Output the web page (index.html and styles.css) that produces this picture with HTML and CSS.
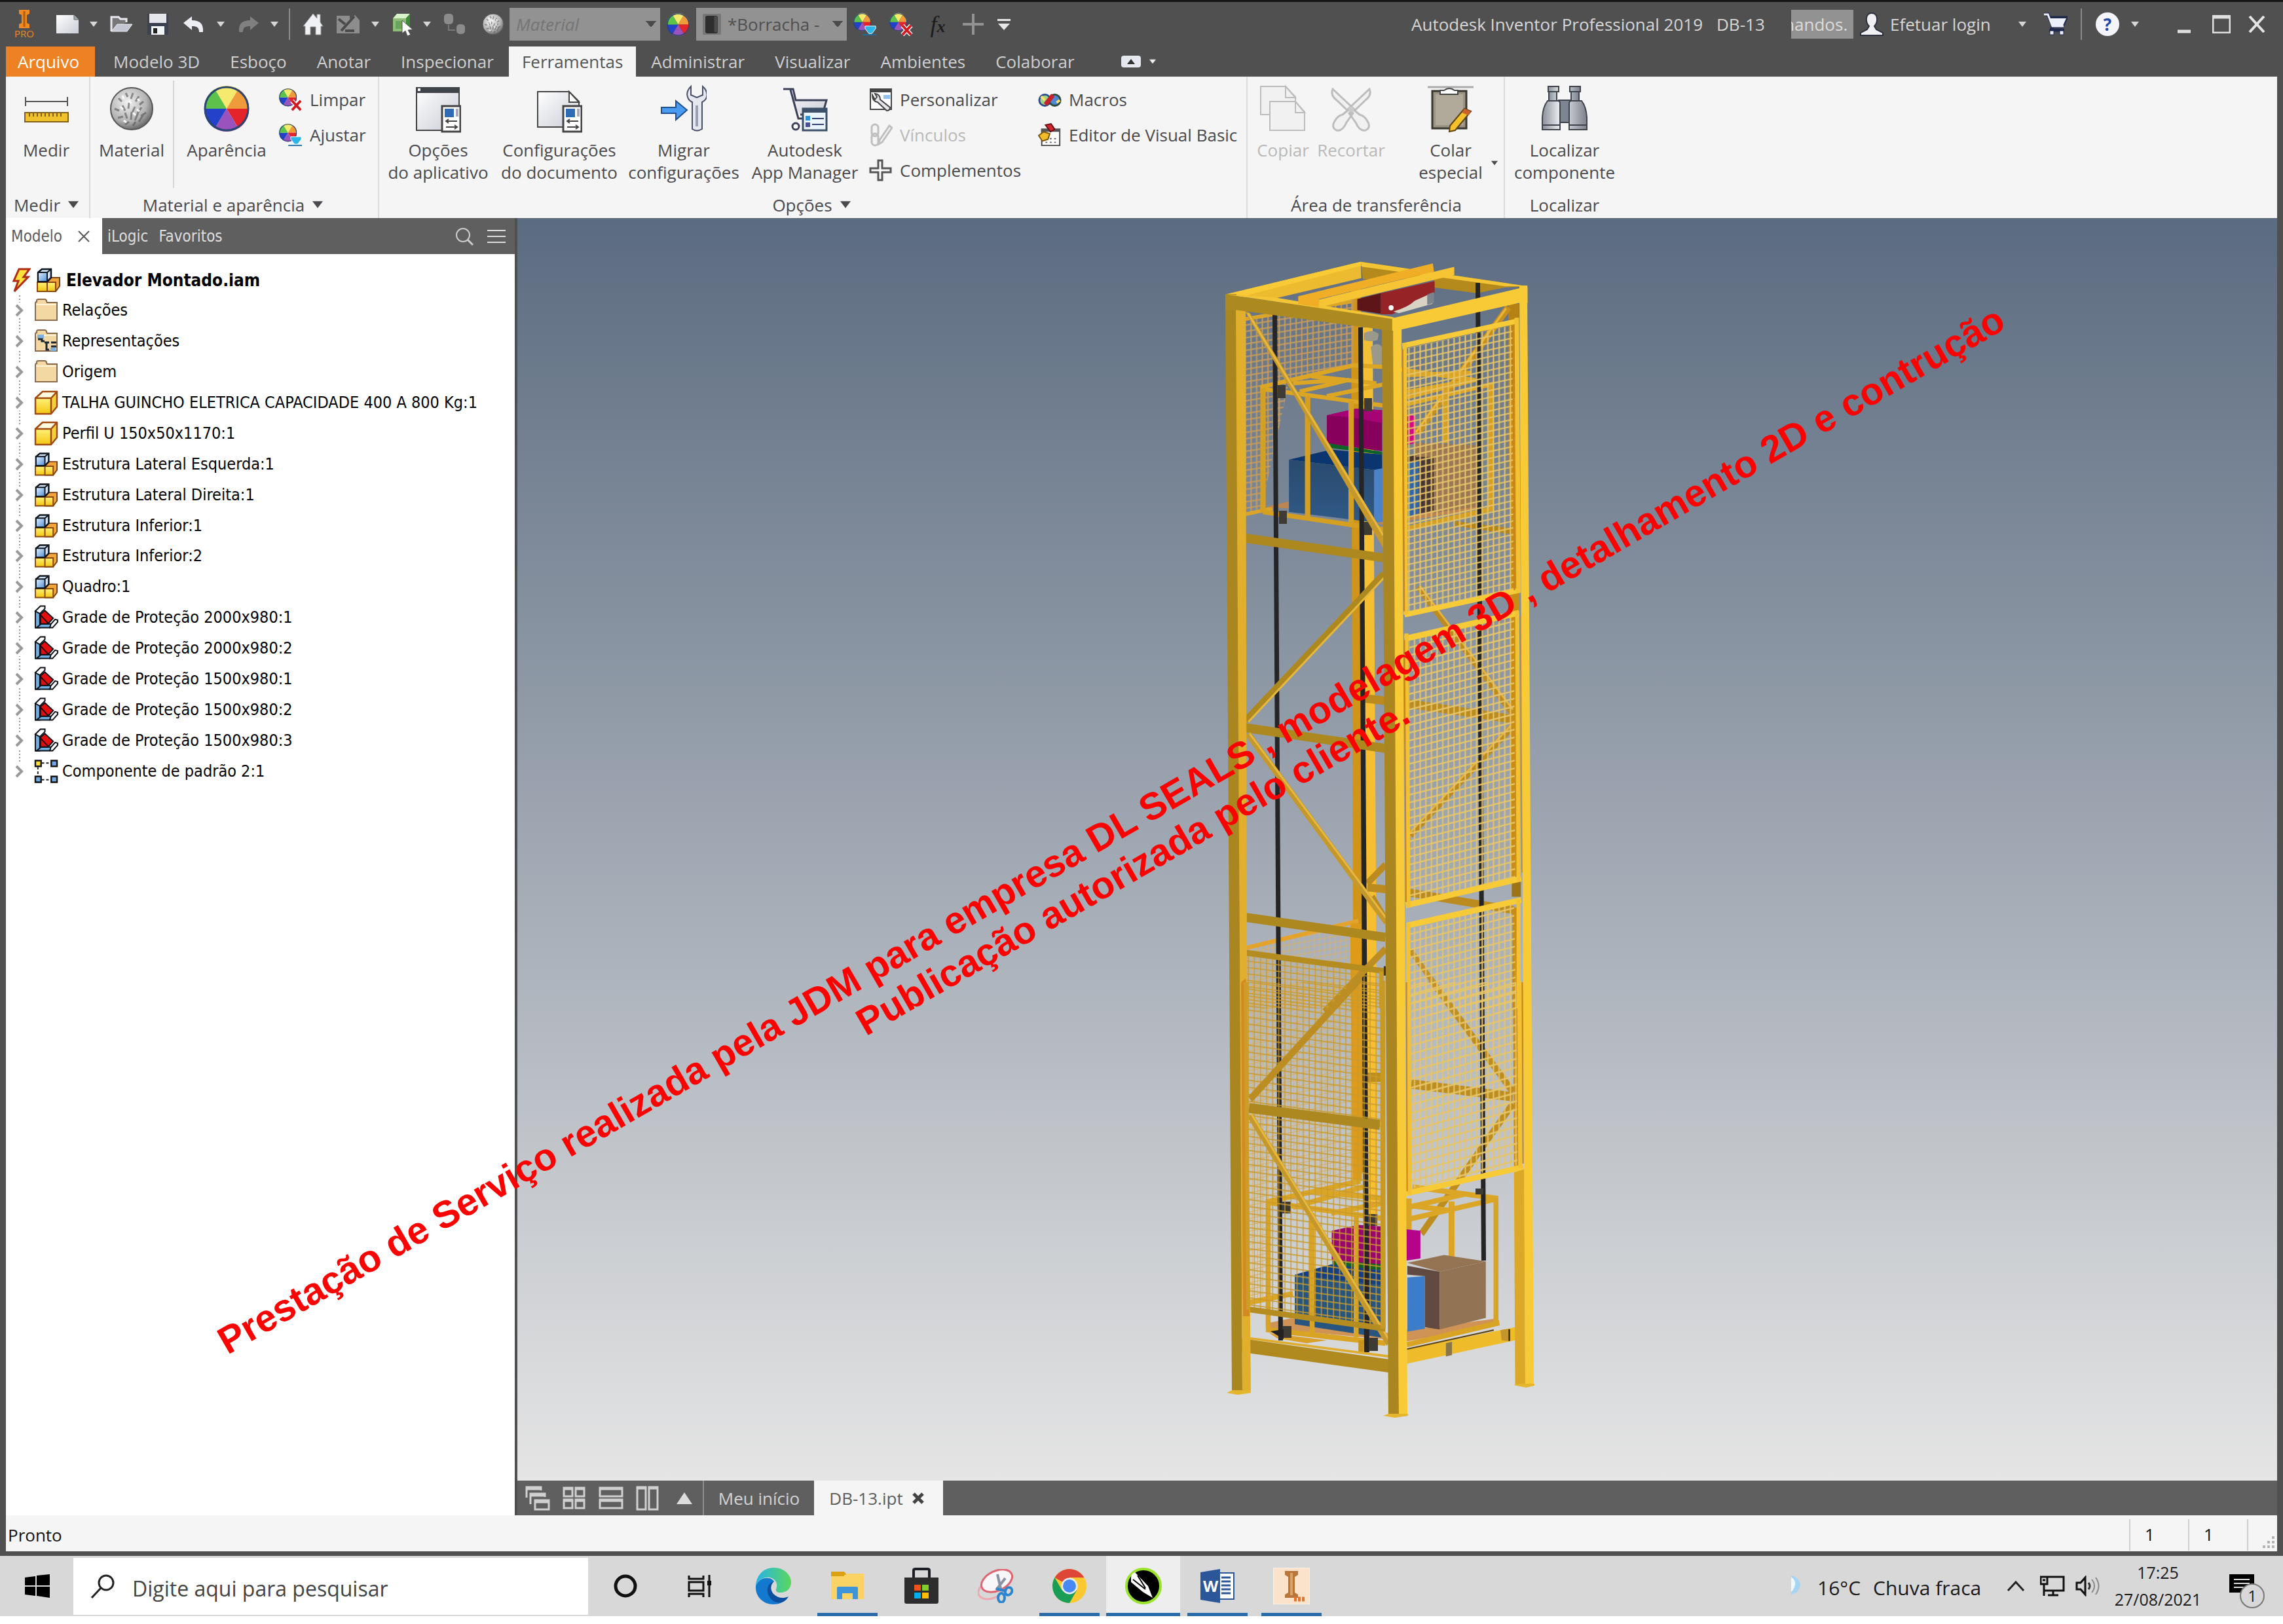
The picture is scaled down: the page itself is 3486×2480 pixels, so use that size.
FILE: index.html
```html
<!DOCTYPE html>
<html lang="pt-BR">
<head>
<meta charset="utf-8">
<title>Autodesk Inventor Professional 2019 - DB-13</title>
<link rel="stylesheet" href="styles.css">
</head>
<body>
<svg class="defs" aria-hidden="true">
  <defs>
    <linearGradient id="paper" x1="0" y1="0" x2="1" y2="1"><stop offset="0" stop-color="#fff"/><stop offset="1" stop-color="#c9cdd6"/></linearGradient>
    <linearGradient id="steel" x1="0" x2="1" y1="0" y2="0"><stop offset="0" stop-color="#8a8f99"/><stop offset=".4" stop-color="#eef0f4"/><stop offset="1" stop-color="#7b808b"/></linearGradient>
    <linearGradient id="gold" x1="0" y1="0" x2="0" y2="1"><stop offset="0" stop-color="#fff27a"/><stop offset="1" stop-color="#f3c510"/></linearGradient>
    <linearGradient id="bluebox" x1="0" y1="0" x2="1" y2="1"><stop offset="0" stop-color="#e4f1ff"/><stop offset="1" stop-color="#4f8fd8"/></linearGradient>
    <radialGradient id="ball" cx=".4" cy=".35" r=".65"><stop offset="0" stop-color="#f2f2f2"/><stop offset=".7" stop-color="#b4b4b4"/><stop offset="1" stop-color="#6d6d6d"/></radialGradient>
    <symbol id="caret" viewBox="0 0 12 8"><path d="M0 0h12L6 8z" fill="currentColor"/></symbol>
    <symbol id="sphere" viewBox="0 0 68 68"><circle cx="34" cy="34" r="32" fill="url(#ball)" stroke="#555" stroke-width="2"/><g stroke="#555" stroke-width="3" fill="none" opacity=".6"><path d="M14 18l5 5m6-13l3 6m8-6l-3 9m12-4l-5 8m12 0l-6 5M8 34l7 3m5-8l4 8m6-12l-1 9m10-3l-4 9m14-8l-6 9m13-1l-8 5M13 48l8-2m3-6l3 9m7-10l-1 12m11-11l-5 12m13-9l-7 11M24 58l6-4m6 6l4-6"/></g><g stroke="#fff" stroke-width="3" opacity=".9"><path d="M20 14l2 5m8 2l3 5m-16 5l4 4m22-16l3 3m-10 18l4 4m-18 8l4 3m16-20l4 3"/></g></symbol>
    <symbol id="wheel" viewBox="0 0 70 70"><g><path d="M35 35L17 5A35 35 0 0 1 53 5z" fill="#f5ea6e"/><path d="M35 35L53 5A34 34 0 0 1 69 35z" fill="#ef9b3c"/><path d="M35 35H69A34 34 0 0 1 53 65z" fill="#e3242b"/><path d="M35 35L53 65A35 35 0 0 1 17 65z" fill="#9a52bd"/><path d="M35 35L17 65A34 34 0 0 1 1 35z" fill="#2341c9"/><path d="M35 35H1A34 34 0 0 1 17 5z" fill="#5cc24a"/></g><circle cx="35" cy="35" r="33" fill="none" stroke="#2c4470" stroke-width="3"/></symbol>
    <symbol id="wheel-clear" viewBox="0 0 38 38"><use href="#wheel" width="29" height="31"/><path d="M21 21l14 15M35 21L21 36" stroke="#fff" stroke-width="7"/><path d="M21 21l14 15M35 21L21 36" stroke="#d3191f" stroke-width="4"/></symbol>
    <symbol id="wheel-fit" viewBox="0 0 38 38"><use href="#wheel" width="29" height="31"/><path d="M19 22h17v4l-6 8h-5l-6-8z" fill="#2cb5e6" stroke="#fff" stroke-width="1"/><path d="M15 36h22" stroke="#1b6fa3" stroke-width="2"/></symbol>
    <symbol id="i-folder" viewBox="0 0 37 36"><path d="M2 33V7q0-2 2-2V3q0-2 3-2h9q3 0 3 3l1 2h15v27z" fill="#f3d8a4" stroke="#8a6a48" stroke-width="2"/><path d="M3 9h31" stroke="#fff3d8" stroke-width="2"/></symbol>
    <symbol id="i-reps" viewBox="0 0 37 36"><use href="#i-folder"/><path d="M5 8h10v6H5z" fill="#7eb2dc"/><path d="M6 15h6v3h4M16 20h7M19 20v11h4M26 20h8M26 26h8" fill="none" stroke="#1d2733" stroke-width="3"/><path d="M25 28h8v5h-8z" fill="#7eb2dc"/></symbol>
    <symbol id="i-part" viewBox="0 0 37 38"><path d="M2 12L13 2H35L26 12z" fill="#fffbe0"/><path d="M26 12L35 2V25L26 36z" fill="#f4cf3a"/><path d="M2 12H26V36H2z" fill="url(#gold)"/><path d="M2 12L13 2H35V25L26 36H2zH26L35 2M26 12V36" fill="none" stroke="#a04a10" stroke-width="2.5" stroke-linejoin="round"/></symbol>
    <symbol id="i-asm" viewBox="0 0 38 38"><path d="M17 22l6-7h13v13l-6 8H17z" fill="#f2a53a" stroke="#7d3f0c" stroke-width="2"/><path d="M2 22h15v14H2zM17 22h13v14H17z" fill="url(#gold)" stroke="#8a480e" stroke-width="2"/><path d="M3 7l6-5h14v13l-6 6H3z" fill="#cfe2f6" stroke="#10151c" stroke-width="2.5"/><path d="M3 7h14v14H3z" fill="url(#bluebox)" stroke="#10151c" stroke-width="2"/><path d="M17 7l6-5" stroke="#10151c" stroke-width="2"/></symbol>
    <symbol id="i-frame" viewBox="0 0 38 38"><path d="M2 9h7v26H2z" fill="#6fb0e4" stroke="#0c1118" stroke-width="2"/><path d="M4 35l7-6h17l-4 6z" fill="#6fb0e4" stroke="#0c1118" stroke-width="2"/><path d="M2 9l8-8h7v4l-8 8z" fill="#fff" stroke="#0c1118" stroke-width="2"/><path d="M10 14l7-6 13 12-8 9H10z" fill="#e40d10" stroke="#0c1118" stroke-width="2"/><path d="M10 15l12 13" stroke="#200" stroke-width="2"/><path d="M26 30l7-8 4 1v3l-8 9h-4z" fill="#fff" stroke="#0c1118" stroke-width="2"/></symbol>
    <symbol id="i-pattern" viewBox="0 0 38 38"><path d="M12 6h15M6 12v15M12 32h15" stroke="#222" stroke-width="2" stroke-dasharray="4 3"/><g stroke="#151515" stroke-width="2.5"><path d="M2 2h9v9H2z" fill="#ffe03a"/><path d="M27 2h9v9h-9zM2 27h9v9H2zM27 27h9v9h-9z" fill="#6fa8e2"/></g></symbol>
    <symbol id="i-chev" viewBox="0 0 12 20"><path d="M2 2l8 8-8 8" fill="none" stroke="#9a9a9a" stroke-width="4"/></symbol>
    <symbol id="cart" viewBox="0 0 38 36"><path d="M2 3h6l8 18h16M10 8h26l-5 11H15zM15 22l-2 5h20" fill="none" stroke="#1f2a4d" stroke-width="5"/><path d="M2 3h6l7 18h17" fill="none" stroke="#eef" stroke-width="3"/><path d="M10 9h26l-5 11H15z" fill="#eef0fa"/><path d="M11 28h6v6h-6zM26 28h6v6h-6z" fill="#eef" stroke="#1f2a4d"/></symbol>
  </defs>
</svg>

<div class="app">
  <header class="titlebar">
    <nav class="quick" aria-label="Acesso rápido">
      <span class="logo"><svg width="18" height="28" viewBox="0 0 18 28"><path d="M1 0h16v6l-4 2v12l4 2v6H1v-6l4-2V8L1 6z" fill="#ef8a22"/><path d="M9 2v24" stroke="#b65c0b" stroke-width="3"/></svg><span>PRO</span></span>
      <button aria-label="Novo"><svg width="36" height="30" viewBox="0 0 36 30"><path d="M1 1h27l7 7v21H1z" fill="url(#paper)"/><path d="M28 1v7h7" fill="#9aa" stroke="#666"/></svg></button>
      <button aria-label="Mais"><svg width="12" height="8"><use href="#caret"/></svg></button>
      <button aria-label="Abrir"><svg width="36" height="26" viewBox="0 0 36 26"><path d="M2 24V2h11l3 3h9v5" fill="#777" stroke="#e8eaf0" stroke-width="3"/><path d="M2 24l9-11h23l-8 11z" fill="#c3c8d3" stroke="#eee"/></svg></button>
      <button aria-label="Salvar"><svg width="34" height="34" viewBox="0 0 34 34"><path d="M1 1h32v32H1z" fill="#3d4250"/><path d="M4 1h26v14H4z" fill="#e4e6ec"/><path d="M7 20h20v13H7z" fill="#f3f4f7"/><path d="M10 23h6v8h-6z" fill="#222"/></svg></button>
      <button aria-label="Desfazer"><svg width="34" height="26" viewBox="0 0 34 26"><path d="M14 1v6c13 0 18 6 17 18h-6c0-7-3-9-11-9v6L1 11z" fill="#eceef3"/></svg></button>
      <button aria-label="Mais"><svg width="12" height="8"><use href="#caret"/></svg></button>
      <button aria-label="Refazer"><svg width="34" height="26" viewBox="0 0 34 26"><path d="M20 1v6C7 7 2 13 3 25h6c0-7 3-9 11-9v6l13-11z" fill="#808080"/></svg></button>
      <button aria-label="Mais"><svg width="12" height="8"><use href="#caret"/></svg></button>
      <i class="vsep"></i>
      <button aria-label="Início"><svg width="32" height="34" viewBox="0 0 32 34"><path d="M16 1l6 7V2h5v12l4 6h-3v13h-8V21h-8v12H4V20H1z" fill="#f0f1f5" stroke="#999"/></svg></button>
      <button aria-label="Esboço"><svg width="38" height="32" viewBox="0 0 38 32"><path d="M1 3h20v5l8-6 7 8v20H1z" fill="#8d8d8d"/><path d="M8 26L28 4M4 8l10 8M14 26h14" stroke="#4a4a4a" stroke-width="4"/></svg></button>
      <button aria-label="Mais"><svg width="12" height="8"><use href="#caret"/></svg></button>
      <button aria-label="Selecionar"><svg width="34" height="36" viewBox="0 0 34 36"><path d="M2 9h20v20H2z" fill="#8dbd78"/><path d="M2 9l6-7h20l-6 7z" fill="#d7f2c9"/><path d="M22 9l6-7v18l-6 9z" fill="#3f8a35"/><path d="M6 13h12v12H6z" fill="#6aa35a"/><path d="M16 12l16 14-7 1 4 7-5 2-3-8-5 4z" fill="#fff" stroke="#555"/></svg></button>
      <button aria-label="Mais"><svg width="12" height="8"><use href="#caret"/></svg></button>
      <button aria-label="Vincular"><svg width="34" height="34" viewBox="0 0 34 34"><g fill="#8b8b8b"><rect x="1" y="1" width="14" height="16" rx="5"/><rect x="20" y="17" width="13" height="15" rx="5"/></g><path d="M8 18v8h10" stroke="#777" stroke-width="2" fill="none"/></svg></button>
      <button aria-label="Material"><svg width="34" height="34"><use href="#sphere"/></svg></button>
      <select class="combo combo-material" aria-label="Material"><option>Material</option></select>
      <button aria-label="Aparência"><svg width="35" height="35"><use href="#wheel"/></svg></button>
      <div class="combo combo-look"><svg width="28" height="32" viewBox="0 0 28 32"><rect width="28" height="32" rx="2" fill="#777"/><rect x="4" y="3" width="19" height="27" rx="3" fill="#2e2e2e"/><path d="M20 4v24" stroke="#4b4b4b" stroke-width="5"/></svg><select aria-label="Aparência"><option>*Borracha -</option></select></div>
      <button aria-label="Ajustar"><svg width="36" height="36"><use href="#wheel-fit"/></svg></button>
      <button aria-label="Limpar"><svg width="38" height="36"><use href="#wheel-clear"/></svg></button>
      <button class="fx" aria-label="Parâmetros"><em>f</em><sub>x</sub></button>
      <button aria-label="Adicionar"><svg width="32" height="32" viewBox="0 0 32 32"><path d="M16 0v32M0 16h32" stroke="#929292" stroke-width="4"/></svg></button>
      <button aria-label="Personalizar"><svg width="20" height="17" viewBox="0 0 20 17"><path d="M0 0h20v3H0zM1 7h18l-9 10z" fill="#e6e6e6"/></svg></button>
    </nav>
    <div class="title-right">
      <span class="product">Autodesk Inventor Professional 2019</span>
      <span>DB-13</span>
      <div class="help-search"><input aria-label="Pesquisar comandos" value="mandos."></div>
      <svg class="mid" width="36" height="36" viewBox="0 0 36 36"><path d="M1 35v-4l10-5 3-5c-6-6-6-20 4-20s10 14 4 20l3 5 10 5v4z" fill="#f0f0f4" stroke="#2d3240" stroke-width="2"/></svg>
      <a class="login" href="#">Efetuar login</a>
      <button aria-label="Mais"><svg width="12" height="8"><use href="#caret"/></svg></button>
      <button aria-label="Loja"><svg width="38" height="36"><use href="#cart"/></svg></button>
      <i class="vsep"></i>
      <button class="help" aria-label="Ajuda"><span>?</span></button>
      <button aria-label="Mais"><svg width="12" height="8"><use href="#caret"/></svg></button>
      <button class="min" aria-label="Minimizar"><svg width="20" height="30" viewBox="0 0 20 30"><path d="M0 26h20" stroke="#e0e0e0" stroke-width="5"/></svg></button>
      <button aria-label="Maximizar"><svg width="28" height="28" viewBox="0 0 28 28"><path d="M1 1h26v26H1zM1 4h26" fill="none" stroke="#e0e0e0" stroke-width="3"/></svg></button>
      <button aria-label="Fechar"><svg width="26" height="26" viewBox="0 0 26 26"><path d="M2 1l22 24M24 1L2 25" stroke="#e4e4e4" stroke-width="4"/></svg></button>
    </div>
  </header>

  <nav class="tabs" aria-label="Faixa de opções">
    <button class="file">Arquivo</button>
    <button>Modelo 3D</button><button>Esboço</button><button>Anotar</button><button>Inspecionar</button>
    <button class="active">Ferramentas</button>
    <button>Administrar</button><button>Visualizar</button><button>Ambientes</button><button>Colaborar</button>
    <button class="toggle" aria-label="Minimizar faixa"><svg width="30" height="18" viewBox="0 0 30 18"><rect width="30" height="18" rx="4" fill="#e6e8f0"/><path d="M15 5l6 8H9z" fill="#333"/></svg><svg width="10" height="8"><use href="#caret"/></svg></button>
  </nav>

  <section class="ribbon">
    <div class="group g-measure">
      <div class="tools">
        <button class="big"><svg width="68" height="74" viewBox="0 0 68 74"><path d="M2 19v14M66 19v14M2 26h64" stroke="#555" stroke-width="2"/><rect x="1" y="43" width="66" height="14" fill="#f0c22c" stroke="#80601a" stroke-width="2"/><path d="M8 44v5m6-5v5m6-5v5m6-5v5m6-5v5m6-5v5m6-5v5m6-5v5m6-5v5" stroke="#80601a" stroke-width="2"/></svg>Medir</button>
      </div>
      <div class="caption">Medir <svg width="16" height="11"><use href="#caret"/></svg></div>
    </div>
    <div class="group g-material">
      <div class="tools">
        <button class="big"><svg width="68" height="74"><use href="#sphere"/></svg>Material</button>
        <i class="rule"></i>
        <button class="big"><svg width="70" height="74"><use href="#wheel"/></svg>Aparência</button>
        <div class="small-col">
          <button><svg width="38" height="38"><use href="#wheel-clear"/></svg>Limpar</button>
          <button><svg width="38" height="38"><use href="#wheel-fit"/></svg>Ajustar</button>
        </div>
      </div>
      <div class="caption">Material e aparência <svg width="16" height="11"><use href="#caret"/></svg></div>
    </div>
    <div class="group g-options">
      <div class="tools">
        <button class="big"><svg width="70" height="74" viewBox="0 0 70 74"><path d="M2 5h65v65H2z" fill="url(#paper)" stroke="#444" stroke-width="2"/><path d="M1 4h67v9H1z" fill="#3f434a"/><path d="M4 6h4v4H4z" fill="#fff"/><path d="M41 33h28v39H41z" fill="#fff" stroke="#444" stroke-width="3"/><path d="M45 37h14v13H45z" fill="#2f6cb5"/><path d="M62 37h4v12h-4z" fill="#aab"/><path d="M47 56h17M47 65h17M51 53l-4 3 4 3M60 62l4 3-4 3" fill="none" stroke="#444" stroke-width="2"/></svg>Opções<br>do aplicativo</button>
        <button class="big"><svg width="70" height="74" viewBox="0 0 70 74"><path d="M2 11h48l15 15v39H2z" fill="url(#paper)" stroke="#444" stroke-width="2"/><path d="M50 11v16h15z" fill="#fff" stroke="#444" stroke-width="2"/><path d="M41 33h28v39H41z" fill="#fff" stroke="#444" stroke-width="3"/><path d="M45 37h14v13H45z" fill="#2f6cb5"/><path d="M62 37h4v12h-4z" fill="#aab"/><path d="M47 56h17M47 65h17M51 53l-4 3 4 3M60 62l4 3-4 3" fill="none" stroke="#444" stroke-width="2"/></svg>Configurações<br>do documento</button>
        <button class="big"><svg width="70" height="74" viewBox="0 0 70 74"><path d="M1 35h22V25l17 14-17 15V44H1z" fill="#4b9cf0" stroke="#1e4f8f" stroke-width="2"/><path d="M46 3q-8 8-5 16 1 5 7 8v41q7 5 15 0V27q6-3 7-8 2-9-6-16v13l-9 4-9-4z" fill="#e6e8f0" stroke="#4a4f68" stroke-width="2"/><path d="M55 32v32" stroke="#9aa0b4" stroke-width="4"/></svg>Migrar<br>configurações</button>
        <button class="big"><svg width="70" height="74" viewBox="0 0 70 74"><path d="M2 7h15l4 17h47l-6 22H28" fill="url(#paper)" stroke="#3c4058" stroke-width="3"/><path d="M13 8l12 44h10" fill="none" stroke="#3c4058" stroke-width="3"/><circle cx="21" cy="64" r="5" fill="#fff" stroke="#3c4058" stroke-width="3"/><path d="M32 37h36v33H32z" fill="#e9f4fc" stroke="#3c5068" stroke-width="3"/><path d="M31 36h38v7H31z" fill="#3c5068"/><path d="M36 48h7v7h-7z" fill="#2d93d8"/><path d="M36 58h7v7h-7z" fill="#4b4f9c"/><path d="M46 52h18M46 61h18" stroke="#347" stroke-width="2"/></svg>Autodesk<br>App Manager</button>
        <div class="small-col mid-col">
          <button><svg width="36" height="38" viewBox="0 0 36 38"><path d="M2 3h32v31H2z" fill="#fff" stroke="#444" stroke-width="2"/><path d="M1 2h34v6H1z" fill="#444"/><path d="M22 12h10v6H22z" fill="#8fc2ee"/><path d="M5 12q0 10 8 11l14 13q5 0 5-5L17 19q0-8-8-9l3 5-3 4z" fill="#e3e5ea" stroke="#444" stroke-width="2"/></svg>Personalizar</button>
          <button disabled><svg width="36" height="36" viewBox="0 0 36 36"><g fill="none" stroke="#bfbfbf" stroke-width="3"><rect x="4" y="2" width="10" height="18" rx="5"/><rect x="4" y="16" width="10" height="18" rx="5"/><path d="M16 26l15-22 4 3-15 22-5 3z"/></g></svg>Vínculos</button>
          <button><svg width="36" height="36" viewBox="0 0 36 36"><path d="M14 3h6v12h13v6H20v12h-6V21H2v-6h12z" fill="#fff" stroke="#555" stroke-width="3"/></svg>Complementos</button>
        </div>
        <div class="small-col">
          <button><svg width="38" height="30" viewBox="0 0 38 30"><circle cx="11" cy="16" r="9" fill="#9fd08a" stroke="#2c4c8c" stroke-width="3"/><circle cx="27" cy="16" r="9" fill="#4d86d2" stroke="#2a4a3a" stroke-width="3"/><path d="M5 10l6 6M30 20l5-4" stroke="#ffe060" stroke-width="4"/><path d="M12 23L24 8" stroke="#c8202a" stroke-width="7"/></svg>Macros</button>
          <button><svg width="38" height="38" viewBox="0 0 38 38"><path d="M6 10h29v26H6z" fill="#fff" stroke="#444" stroke-width="2"/><path d="M5 9h31v5H5z" fill="#555"/><path d="M12 3l9-2 6 9-7 4z" fill="#d02430" stroke="#611" stroke-width="2"/><path d="M1 20l8-6 10 3-3 9-9 3z" fill="#f1bb2a" stroke="#7a560d" stroke-width="2"/><path d="M12 31h3m4 0h3m4 0h3m-3-6h3m-10 0h3" stroke="#667" stroke-width="2"/></svg>Editor de Visual Basic</button>
        </div>
      </div>
      <div class="caption">Opções <svg width="16" height="11"><use href="#caret"/></svg></div>
    </div>
    <div class="group g-clipboard">
      <div class="tools">
        <button class="big" disabled><svg width="70" height="74" viewBox="0 0 70 74"><g fill="#f1f1f1" stroke="#bdbdbd" stroke-width="2"><path d="M1 3h38l15 16v27H1z"/><path d="M39 3v17h15z"/><path d="M15 26h39l14 16v28H15z"/><path d="M54 26v17h14z"/></g></svg>Copiar</button>
        <button class="big" disabled><svg width="62" height="74" viewBox="0 0 62 74"><g fill="#f1f1f1" stroke="#bdbdbd" stroke-width="3"><path d="M3 7q-4 9 6 17l21 20 6-6zM59 7q4 9-6 17L32 44l-6-6z"/><path d="M28 38l6 6-10 14q-6 14-15 12-9-4-3-14 4-8 12-10zM34 38l-6 6 10 14q6 14 15 12 9-4 3-14-4-8-12-10z"/></g><circle cx="31" cy="38" r="4" fill="#ccc"/></svg>Recortar</button>
        <i class="rule"></i>
        <button class="big paste"><svg width="72" height="74" viewBox="0 0 72 74"><path d="M1 4h70" stroke="#aaa" stroke-width="3"/><path d="M8 10h52v57H8z" fill="#9b9384" stroke="#3a372f" stroke-width="3"/><path d="M13 15h42v47H13z" fill="#b1a999"/><path d="M20 15V9h6q8-6 16 0h5v6z" fill="#fff" stroke="#444" stroke-width="2"/><path d="M57 37l10 4-24 29-9 2 1-9z" fill="#f5c12b" stroke="#5d4312" stroke-width="2"/><path d="M57 37l10 4-4 6-10-4z" fill="#c9622b"/></svg>Colar<br>especial<svg class="drop" width="10" height="8"><use href="#caret"/></svg></button>
      </div>
      <div class="caption">Área de transferência</div>
    </div>
    <div class="group g-find">
      <div class="tools">
        <button class="big"><svg width="70" height="74" viewBox="0 0 70 74"><g stroke="#3e434c" stroke-width="2"><path d="M26 24h18v34H26z" fill="#7d8492"/><path d="M11 10h12v16H11zM45 10h12v16H45z" fill="url(#steel)"/><path d="M10 3h16v8H10zM43 3h16v8H43z" fill="url(#steel)"/><path d="M9 25h16q3 0 3 4v40H1V50Q2 34 9 25zM61 25H45q-3 0-3 4v40h27V50Q68 34 61 25z" fill="url(#steel)"/><path d="M1 62h27M42 62h27"/></g></svg>Localizar<br>componente</button>
      </div>
      <div class="caption">Localizar</div>
    </div>
  </section>

  <main class="workspace">
    <aside class="browser">
      <div class="browser-tabs">
        <button class="active">Modelo <svg width="20" height="20" viewBox="0 0 20 20"><path d="M2 2l16 16M18 2L2 18" stroke="#555" stroke-width="2"/></svg></button>
        <button>iLogic</button><button>Favoritos</button>
        <button class="find" aria-label="Pesquisar"><svg width="30" height="30" viewBox="0 0 30 30"><circle cx="13" cy="13" r="10" fill="none" stroke="#ccc" stroke-width="2"/><path d="M20 20l8 8" stroke="#ccc" stroke-width="3"/></svg></button>
        <button class="menu" aria-label="Menu"><svg width="28" height="24" viewBox="0 0 28 24"><path d="M0 3h28M0 12h28M0 21h28" stroke="#ddd" stroke-width="2"/></svg></button>
      </div>
      <div class="root"><svg width="28" height="38" viewBox="0 0 28 38"><path d="M10 2h16l-9 12h7L3 36l6-16H2z" fill="#ffe23a" stroke="#b02c14" stroke-width="3"/></svg><svg width="38" height="38"><use href="#i-asm"/></svg>Elevador Montado.iam</div>
      <ul class="tree">
        <li><svg class="chev"><use href="#i-chev"/></svg><svg class="ico"><use href="#i-folder"/></svg>Relações</li>
        <li><svg class="chev"><use href="#i-chev"/></svg><svg class="ico"><use href="#i-reps"/></svg>Representações</li>
        <li><svg class="chev"><use href="#i-chev"/></svg><svg class="ico"><use href="#i-folder"/></svg>Origem</li>
        <li><svg class="chev"><use href="#i-chev"/></svg><svg class="ico"><use href="#i-part"/></svg>TALHA GUINCHO ELETRICA CAPACIDADE 400 A 800 Kg:1</li>
        <li><svg class="chev"><use href="#i-chev"/></svg><svg class="ico"><use href="#i-part"/></svg>Perfil U 150x50x1170:1</li>
        <li><svg class="chev"><use href="#i-chev"/></svg><svg class="ico"><use href="#i-asm"/></svg>Estrutura Lateral Esquerda:1</li>
        <li><svg class="chev"><use href="#i-chev"/></svg><svg class="ico"><use href="#i-asm"/></svg>Estrutura Lateral Direita:1</li>
        <li><svg class="chev"><use href="#i-chev"/></svg><svg class="ico"><use href="#i-asm"/></svg>Estrutura Inferior:1</li>
        <li><svg class="chev"><use href="#i-chev"/></svg><svg class="ico"><use href="#i-asm"/></svg>Estrutura Inferior:2</li>
        <li><svg class="chev"><use href="#i-chev"/></svg><svg class="ico"><use href="#i-asm"/></svg>Quadro:1</li>
        <li><svg class="chev"><use href="#i-chev"/></svg><svg class="ico"><use href="#i-frame"/></svg>Grade de Proteção 2000x980:1</li>
        <li><svg class="chev"><use href="#i-chev"/></svg><svg class="ico"><use href="#i-frame"/></svg>Grade de Proteção 2000x980:2</li>
        <li><svg class="chev"><use href="#i-chev"/></svg><svg class="ico"><use href="#i-frame"/></svg>Grade de Proteção 1500x980:1</li>
        <li><svg class="chev"><use href="#i-chev"/></svg><svg class="ico"><use href="#i-frame"/></svg>Grade de Proteção 1500x980:2</li>
        <li><svg class="chev"><use href="#i-chev"/></svg><svg class="ico"><use href="#i-frame"/></svg>Grade de Proteção 1500x980:3</li>
        <li><svg class="chev"><use href="#i-chev"/></svg><svg class="ico"><use href="#i-pattern"/></svg>Componente de padrão 2:1</li>
      </ul>
    </aside>

    <section class="stage">
      <svg class="model" viewBox="790 333 2687 1928" role="img" aria-label="Elevador">
        <defs>
          <pattern id="meshR" width="25" height="29" patternUnits="userSpaceOnUse" patternTransform="skewY(-12)"><path d="M0 4h25M4 0v29" stroke="#e6c468" stroke-width="6" fill="none"/></pattern>
          <pattern id="meshL" width="25" height="27" patternUnits="userSpaceOnUse" patternTransform="skewY(-9)"><path d="M0 4h25M4 0v27" stroke="#c79a5a" stroke-width="6" fill="none"/></pattern>
          <pattern id="meshF" width="27" height="24" patternUnits="userSpaceOnUse" patternTransform="skewY(6)"><path d="M0 3h27M3 0v24" stroke="#c99a2c" stroke-width="4" fill="none"/></pattern>
          <pattern id="meshB" width="23" height="22" patternUnits="userSpaceOnUse" patternTransform="skewY(-9)"><path d="M0 3h23M3 0v22" stroke="#d8b068" stroke-width="3" fill="none"/></pattern>
          <linearGradient id="crate" x1="0" x2="0" y1="0" y2="1"><stop offset="0" stop-color="#2a4a6e"/><stop offset="1" stop-color="#305a86"/></linearGradient>
        </defs>

        <!-- rear column and rear bracing -->
        <path d="M2063 440L2078 440 2083 1790 2067 1790z" fill="#cf9418"/>
        <path d="M2080 500H2096L2104 1860H2086z" fill="#f6be31"/>
        <g transform="translate(1840 380) scale(.3444 .3571)">
          <path d="M178 295L660 215V500L370 580 250 1110 180 1130z" fill="url(#meshL)"/>
          <path d="M178 300L650 225M180 1135L300 1110" stroke="#dba52a" stroke-width="16"/>
          <path d="M690 55L1430 160 1330 165 1205 190 1015 165V125L700 130z" fill="#b58a1d"/>
          <path d="M690 55L1430 160H1330L695 76z" fill="#f3c535"/>
          <path d="M90 195L690 55 693 125 310 212 180 207z" fill="#edbb2f"/>
          <path d="M90 195L690 55 693 72 180 200z" fill="#f8cb36"/>
          <path d="M675 215L780 190V278L675 262z" fill="#5e1518"/>
          <path d="M780 190L1018 138V188L830 280H780z" fill="#962427"/>
          <path d="M835 268Q900 250 930 222L985 198 1008 195V235L860 275z" fill="#d8d3c4"/>
          <path d="M985 195L1015 185V230L985 240z" fill="#7d858c"/><circle cx="825" cy="252" r="11" fill="#fff"/>
          <path d="M1345 235H1392V640H1345z" fill="#b58112"/>
          <path d="M1345 250L940 790" stroke="#c88f1c" stroke-width="30"/>
          <path d="M1335 255L935 785" stroke="#e8b638" stroke-width="9"/>
          <path d="M1345 640H1392V1560H1355z" fill="#c98c15"/>
          <path d="M1110 1165L1360 1195V1220L1110 1185z" fill="#b98416"/>
        </g>

        <!-- upper cabin -->
        <g transform="translate(1840 380) scale(.3444 .3571)">
          <path d="M705 380H738V620H705z" fill="#f1c036"/><path d="M705 360q40-20 65 5l-5 25q-30 10-60 0zM735 420q30-25 50 0v80h-40z" fill="#9b9a8a"/>
          <g fill="none" stroke="#dca624" stroke-width="18">
            <path d="M245 592L660 498 790 505M390 575L620 560M470 545L760 575M420 610L640 560M540 630L790 580M790 505L1190 560 895 612M895 540L1180 530"/>
            <path d="M245 598L790 670M895 665L1275 578M895 635L1200 560"/>
          </g>
          <path d="M265 1105L372 1080 790 1180 1225 1110 1225 1090 790 1130z" fill="#bd8650"/>
          <path d="M540 712L670 683 785 690V865L540 832z" fill="#86005c"/>
          <path d="M540 712L670 683 785 690V745L640 720z" fill="#a60474"/>
          <path d="M895 708L932 716V832L895 838z" fill="#d8048c"/>
          <path d="M550 832L785 868V880L560 852z" fill="#0d6326"/>
          <path d="M372 902L560 858 785 880V950z" fill="#0b356e"/>
          <path d="M372 902L750 945V1170L372 1125z" fill="url(#crate)"/>
          <path d="M750 945L788 938V1168L750 1172z" fill="#4b83c6"/>
          <path d="M900 905L948 910V1132L900 1145z" fill="#2a67b2"/>
          <path d="M900 885L1015 880V1120L948 1135V910H900z" fill="#453535"/>
          <path d="M935 830L1222 840V1100L1015 1130V890H935z" fill="#9b7854"/>
          <g fill="none" stroke="#d5a022" stroke-width="24">
            <path d="M257 595V1125M455 630V1150M648 650V1180M1268 575V1120M1068 590V830"/>
            <path d="M257 1125L790 1200M900 1195L1280 1110" stroke-width="20"/>
          </g>
        </g>

        <!-- middle rear bracing -->
        <g transform="translate(1840 900) scale(.3444 .4082)">
          <path d="M1350 100H1392V1080L1360 1085z" fill="#c98c15"/>
          <g fill="none" stroke="#bb8b20" stroke-width="26">
            <path d="M710 408L800 417M905 428L1360 485" stroke-width="32"/>
            <path d="M945 -10L1360 460M1360 515L910 920"/>
            <path d="M720 1115L800 1122M910 1135L1370 1200" stroke-width="30"/>
            <path d="M800 1030L720 1100M740 1150L800 1235"/>
          </g>
          <path d="M955 -10L1365 450M1355 510L908 910" stroke="#e3b444" stroke-width="8"/>
          <path d="M1360 1090H1400V1150H1360z" fill="#9b7416"/>
          <path d="M165 1340L670 1240V1568H190z" fill="url(#meshB)"/>
          <path d="M165 1345L680 1240" stroke="#e4a42c" stroke-width="16"/>
          <path d="M645 1250H695V1568H645z" fill="#de9a19"/>
          <path d="M1362 1190H1385V1568H1362z" fill="#c98c15"/>
        </g>

        <!-- lower cabin -->
        <g transform="translate(1840 1500) scale(.3444 .4464)">
          <path d="M190 0H670V700L270 750V1090L200 1100z" fill="url(#meshB)"/>
          <path d="M647 0H695V680L655 690z" fill="#de9a19"/>
          <path d="M1365 0H1390V640H1370z" fill="#c98c15"/>
          <g fill="none" stroke="#be8d1f" stroke-width="26">
            <path d="M720 325H780M915 348L1365 392" stroke-width="32"/>
            <path d="M1000 -10L1365 375M1365 415L960 860"/>
          </g>
          <g fill="none" stroke="#dba626" stroke-width="18">
            <path d="M270 752L690 680M390 770L700 700M480 715L790 740M560 790L790 755M920 700L1300 740M900 770L1150 725M920 765L1080 780M895 812L1300 740"/>
            <path d="M270 752L790 808"/>
            <path d="M200 1095L390 1065"/>
            <path d="M1093 750V940M903 740V850" stroke-width="26"/>
          </g>
          <path d="M285 1165L380 1150 800 1200 1300 1150 1300 1170 897 1228 290 1185z" fill="#cf9455"/>
          <path d="M562 850L680 830 780 835V975L562 950z" fill="#9a0670"/>
          <path d="M893 845L955 850V945L893 952z" fill="#b5038a"/>
          <path d="M565 950L780 965V985L565 970z" fill="#0d6326"/>
          <path d="M398 1000L560 965 780 985V1040z" fill="#123f86"/>
          <path d="M398 1000L780 1035V1215L398 1170z" fill="#27557f"/>
          <path d="M897 1010L975 1005V1185L897 1195z" fill="#3b7dc8"/>
          <path d="M897 960L1060 933 1245 955 1040 990z" fill="#957453"/>
          <path d="M897 970L1040 990V1188L975 1180V1005L897 1000z" fill="#604a42"/>
          <path d="M1040 990L1245 955V1148L1040 1188z" fill="#927353"/>
          <g fill="none" stroke="#d9a424" stroke-width="22">
            <path d="M280 750V1185M475 790V1200M670 800V1215M1290 740V1170"/>
            <path d="M270 1188L800 1235M895 1240L1305 1165" stroke-width="18"/>
          </g>
          <path d="M285 1200L540 1225 450 1235 320 1218z" fill="#d9a02a"/>
          <path d="M680 1225H705V1265H680z" fill="#c8931f"/>
          <path d="M895 1255L1375 1180V1225L895 1305z" fill="#eebb2b"/>
          <path d="M895 1255L1280 1190" stroke="#5b4310" stroke-width="5"/>
          <path d="M1068 1235L1095 1230V1275L1068 1280z" fill="#8a7547"/>
          <path d="M1310 1190L1350 1185V1228L1315 1225z" fill="#c5952a"/><path d="M1345 1187h8v40h-8z" fill="#463c22"/>
        </g>

        <!-- guide rails -->
        <g fill="#252525">
          <path d="M1943 480H1950L1959 2047H1952z"/>
          <path d="M2074 500H2081L2091 2065H2083z"/>
          <path d="M2253 432H2260L2269 1925H2262z"/>
        </g>
        <g fill="#3e3b34">
          <path d="M1951 588h12v20h-12zM2083 608h12v20h-12zM1953 780h12v20h-12zM2083 797h12v20h-12zM1957 1835h14v18h-14zM2090 1854h13v18h-13zM1959 2025h13v18h-13zM2090 2043h14v20h-14zM2253 1815h12v9h-12z"/>
        </g>
        <path d="M1940 2033L1960 2030V2045z" fill="#222"/>

        <!-- right hand guard panels -->
        <g transform="translate(1840 380) scale(.3444 .3571)">
          <path d="M892 425L1370 325 1375 1460 895 1555z" fill="url(#meshR)"/>
          <path d="M875 415L1388 308M885 1565L1395 1460" stroke="#f7ca37" stroke-width="22"/>
          <path d="M885 405L890 1565M1382 295L1390 1470" stroke="#f3c233" stroke-width="20"/>
          <path d="M876 430L883 1550M1366 330L1372 1460" stroke="#ca8416" stroke-width="7"/>
        </g>
        <g transform="translate(1840 900) scale(.3444 .4082)">
          <path d="M905 190L1370 100 1375 1080 905 1170z" fill="url(#meshR)"/>
          <path d="M885 185L1392 88M890 1182L1402 1082M895 1258L1402 1162" stroke="#f7ca37" stroke-width="22"/>
          <path d="M893 165L902 1190M1384 80L1390 1090" stroke="#f3c233" stroke-width="18"/>
          <path d="M884 190L891 1170M1402 100L1406 1060" stroke="#ca8416" stroke-width="6"/>
          <path d="M910 1350L1100 1575" stroke="#c0902a" stroke-width="22"/>
          <path d="M910 1270L1370 1175 1380 1568H912z" fill="url(#meshR)"/>
          <path d="M902 1250V1568M1390 1160V1568" stroke="#f3c233" stroke-width="18"/>
        </g>
        <g transform="translate(1840 1500) scale(.3444 .4464)">
          <path d="M915 0H1380L1385 625 915 705z" fill="url(#meshR)"/>
          <path d="M893 722L1412 632" stroke="#f7ca37" stroke-width="20"/>
          <path d="M903 -5L907 725M1393 -5L1398 635" stroke="#f3c233" stroke-width="18"/>
          <path d="M893 0L896 715M1407 0L1410 620" stroke="#ca8416" stroke-width="6"/>
          <path d="M1370 650L1415 640 1420 1378H1375z" fill="#dca828"/>
        </g>

        <!-- left face bracing and its guard -->
        <g transform="translate(1840 380) scale(.3444 .3571)">
          <path d="M175 265L200 275 790 1215V1280z" fill="#c4982a"/>
          <path d="M190 275L790 1225" stroke="#e6b840" stroke-width="9"/>
          <path d="M165 1215L790 1302V1340L165 1255z" fill="#ad881f"/>
        </g>
        <g transform="translate(1840 900) scale(.3444 .4082)" fill="none">
          <path d="M792 -58L180 490" stroke="#ad881f" stroke-width="26"/>
          <path d="M792 -42L192 496" stroke="#e6b840" stroke-width="8"/>
          <path d="M180 518L800 595M165 1225L800 1302" stroke="#ad881f" stroke-width="34"/>
          <path d="M190 540L805 1245" stroke="#c4982a" stroke-width="26"/>
          <path d="M198 540L805 1232" stroke="#e6b840" stroke-width="8"/>
          <path d="M182 1370L775 1425V1568H182z" fill="url(#meshF)"/>
          <path d="M800 1345L530 1580" stroke="#bb8d22" stroke-width="26"/>
          <path d="M165 1358L795 1428" stroke="#b48c20" stroke-width="22"/>
          <path d="M175 1365V1568M782 1430V1568" stroke="#c79a25" stroke-width="20"/>
          <path d="M158 1330v35M797 1410v35" stroke="#443818" stroke-width="9"/>
        </g>
        <g transform="translate(1840 1500) scale(.3444 .4464)" fill="none">
          <path d="M190 0H780V1180L195 1115z" fill="url(#meshF)"/>
          <path d="M690 -15L200 400" stroke="#bb8d22" stroke-width="26"/>
          <path d="M195 430L775 488" stroke="#ad881f" stroke-width="34"/>
          <path d="M200 455L815 1235" stroke="#c4982a" stroke-width="26"/>
          <path d="M205 450L815 1222" stroke="#e6b840" stroke-width="8"/>
          <path d="M185 1118L800 1185" stroke="#b48c20" stroke-width="20"/>
          <path d="M787 -5L790 1185" stroke="#c79a25" stroke-width="22"/>
          <path d="M160 1218L815 1290V1335L160 1265z" fill="#b08a1f"/>
          <path d="M200 1218L815 1280" stroke="#e0ac2b" stroke-width="8"/>
        </g>

        <!-- main columns and top beams -->
        <path d="M1871 449H1888L1897 2126H1881z" fill="#a98620"/>
        <path d="M1887 460H1902L1904 1480 1910 2124 1897 2126z" fill="#e2af2d"/>
        <path d="M1902 1494L1903 1500 1908 2010H1898L1895 1500z" fill="#d28a22"/>
        <path d="M1899 1500H1905L1909 2000H1903z" fill="#cd9d27"/>
        <path d="M2110 490H2128L2136 2161H2120z" fill="#a98620"/>
        <path d="M2127 485H2140L2149 2159 2136 2161z" fill="#f8cb36"/>
        <path d="M2320 436H2332L2342 2114 2329 2117z" fill="#f8cb36"/>
        <path d="M1873 2127L1881 2123H1910V2127L1890 2130zM2112 2162L2120 2159H2150V2162L2130 2165zM2311 2115L2320 2113H2343V2116L2330 2119z" fill="#e5b52d"/>
        <g transform="translate(1840 380) scale(.3444 .3571)">
          <path d="M90 195L833 297V347L785 345 138 262H90z" fill="#ad8a20"/>
          <path d="M90 194L310 208 835 292V300z" fill="#f3c535"/>
          <path d="M830 297L1430 160V232L1390 232 870 345 830 350z" fill="#f8cb36"/>
          <path d="M413 203L1010 62 1015 97 505 215V250L413 236z" fill="#f0ae26"/>
          <path d="M505 217L1105 77V112L505 250z" fill="#f7c433"/>
        </g>
      </svg>
      <nav class="doc-tabs" aria-label="Documentos">
        <button aria-label="Cascata"><svg width="38" height="38" viewBox="0 0 38 38"><g fill="#5f5f5f" stroke="#d0d0d0" stroke-width="3"><path d="M2 18V2h22v5M2 5h22M8 28V12h22v5M8 15h22"/><path d="M15 22h21v14H15zM15 25h21"/></g></svg></button>
        <button aria-label="Organizar"><svg width="36" height="36" viewBox="0 0 36 36"><path d="M2 2h13v13H2zM20 2h13v13H20zM2 20h13v13H2zM20 20h13v13H20zM2 4h13m5 0h13M2 22h13m5 0h13" fill="none" stroke="#d0d0d0" stroke-width="3"/></svg></button>
        <button aria-label="Horizontal"><svg width="38" height="36" viewBox="0 0 38 36"><path d="M2 2h34v13H2zM2 20h34v13H2zM2 4h34M2 22h34" fill="none" stroke="#d0d0d0" stroke-width="3"/></svg></button>
        <button aria-label="Vertical"><svg width="36" height="38" viewBox="0 0 36 38"><path d="M2 2h13v34H2zM20 2h13v34H20zM2 4h13m5 0h13" fill="none" stroke="#d0d0d0" stroke-width="3"/></svg></button>
        <button aria-label="Expandir"><svg width="24" height="18" viewBox="0 0 24 18"><path d="M12 0l12 18H0z" fill="#dcdcdc"/></svg></button>
        <button class="home-tab">Meu início</button>
        <button class="doc-tab">DB-13.ipt <svg width="18" height="18" viewBox="0 0 18 18"><path d="M2 2l14 14M16 2L2 16" stroke="#444" stroke-width="5"/></svg></button>
      </nav>
    </section>

    <p class="notice">Prestação de Serviço realizada pela JDM para empresa DL SEALS , modelagem 3D , detalhamento 2D e contrução<br>Publicação autorizada pelo cliente.</p>
  </main>

  <footer class="status"><span>Pronto</span><span class="cell">1</span><span class="cell">1</span><span class="grip"><svg width="20" height="20" viewBox="0 0 20 20"><path d="M14 0h4v4h-4zM7 7h4v4H7zM14 7h4v4h-4zM0 14h4v4H0zM7 14h4v4H7zM14 14h4v4h-4z" fill="#b4b4b4"/></svg></span></footer>
</div>

<div class="taskbar">
  <button class="start" aria-label="Iniciar"><svg width="38" height="36" viewBox="0 0 38 36"><path d="M0 5l16-2v14H0zM18 2l20-2v17H18zM0 19h16v14L0 31zM18 19h20v17l-20-3z" fill="#000"/></svg></button>
  <label class="search"><svg width="38" height="38" viewBox="0 0 38 38"><circle cx="24" cy="13" r="11" fill="none" stroke="#222" stroke-width="3"/><path d="M16 21L2 36" stroke="#222" stroke-width="3"/></svg><input placeholder="Digite aqui para pesquisar" aria-label="Pesquisar"></label>
  <button aria-label="Cortana"><svg width="38" height="38" viewBox="0 0 38 38"><circle cx="19" cy="19" r="15" fill="none" stroke="#111" stroke-width="5"/></svg></button>
  <button aria-label="Visão de tarefas"><svg width="38" height="38" viewBox="0 0 38 38"><path d="M3 3v5h22V3M3 13h22v13H3zM3 36v-5h22v5M34 2v34" fill="none" stroke="#111" stroke-width="3"/><path d="M31 11h6v7h-6z" fill="#111"/></svg></button>
  <button aria-label="Edge"><svg width="56" height="56" viewBox="0 0 56 56"><defs><linearGradient id="eg" x1="0" x2="1"><stop offset="0" stop-color="#28b2e8"/><stop offset="1" stop-color="#5bd75c"/></linearGradient></defs><path d="M1 28C2 10 14 0 29 0c16 0 27 12 26 24-1 9-8 14-16 14-5 0-8-2-7-5 4-9-2-17-10-18C12 14 5 19 1 28z" fill="url(#eg)"/><path d="M1 28c4-9 11-13 19-12 4 0 7 2 9 5-8 3-9 14-3 21 5 6 15 7 24 3-6 8-14 11-22 11C12 56 0 44 1 28z" fill="#1379cf"/><path d="M29 21c-9 2-13 12-8 22 4 8 12 12 20 10 5-2 8-5 10-9-9 4-17 2-23-4-5-6-5-14 1-19z" fill="#0c4f9e"/></svg></button>
  <button class="open" aria-label="Explorador"><svg width="50" height="44" viewBox="0 0 50 44"><path d="M0 0h20l4 5h-4v5H0z" fill="#dda012"/><path d="M0 7h20l4-4h26v39H0z" fill="#fbd364"/><path d="M9 42V25q0-2 3-2h26q3 0 3 2v17h-8V33H17v9z" fill="#3e95d9"/></svg></button>
  <button aria-label="Loja"><svg width="52" height="56" viewBox="0 0 52 56"><path d="M14 15V4q0-2 3-2h18q3 0 3 2v11" fill="none" stroke="#1c1f26" stroke-width="4"/><path d="M0 15h52v37q0 3-3 3H3q-3 0-3-3z" fill="#2d2d2d"/><path d="M15 26h10v9H15z" fill="#f1511b"/><path d="M27 26h10v9H27z" fill="#80cc28"/><path d="M15 38h10v9H15z" fill="#00adef"/><path d="M27 38h10v9H27z" fill="#fbbc09"/></svg></button>
  <button aria-label="Ferramenta de captura"><svg width="54" height="52" viewBox="0 0 54 52"><ellipse cx="20" cy="32" rx="20" ry="13" fill="none" stroke="#eda9b0" stroke-width="3" transform="rotate(-20 20 32)"/><ellipse cx="29" cy="18" rx="25" ry="15" fill="#f8f6f8" stroke="#df6573" stroke-width="3" transform="rotate(-25 29 18)"/><path d="M30 8l6 26M42 14L28 32" stroke="#8a93a4" stroke-width="4"/><g fill="none" stroke="#2b86cf" stroke-width="4"><ellipse cx="36" cy="44" rx="5" ry="7"/><ellipse cx="47" cy="34" rx="5" ry="6" transform="rotate(30 47 34)"/><path d="M28 30l16 4"/></g></svg></button>
  <button class="open" aria-label="Chrome"><svg width="52" height="52" viewBox="0 0 52 52"><circle cx="26" cy="26" r="26" fill="#fbc92f"/><path d="M26 26L3.500 13A26 26 0 0 1 48.500 13H26z" fill="#de4638"/><path d="M3.500 13A26 26 0 0 0 26 52L37.500 32 26 38 14.500 32z" fill="#1a9d56"/><circle cx="26" cy="26" r="12.500" fill="#e9eef5"/><circle cx="26" cy="26" r="10" fill="#4688f4"/></svg></button>
  <button class="open current" aria-label="CorelDRAW"><svg width="56" height="56" viewBox="0 0 56 56"><circle cx="28" cy="28" r="26" fill="#000" stroke="#9ae22c" stroke-width="4"/><path d="M9 16q0-7 6-9l20 21 7 18-15-9L9 22z" fill="#fff"/><path d="M12 18l19 15M19 12l12 19" stroke="#000" stroke-width="2"/></svg></button>
  <button class="open" aria-label="Word"><svg width="54" height="54" viewBox="0 0 54 54"><path d="M26 7h26v40H26z" fill="#fff" stroke="#2b579a" stroke-width="2"/><path d="M33 14h14M33 20h14M33 26h14M33 32h14M33 38h14" stroke="#2b579a" stroke-width="3"/><path d="M1 6L31 1v52L1 48z" fill="#2b579a"/><text x="5" y="36" class="word-w">W</text></svg></button>
  <button class="open" aria-label="Inventor"><svg width="56" height="56" viewBox="0 0 56 56"><rect width="56" height="56" fill="#fbe3cb" stroke="#fff"/><path d="M18 5h20v6l-5 3v24l5 3v5H18v-5l5-3V14l-5-3z" fill="#b9763a"/><path d="M28 8v34" stroke="#dca268" stroke-width="4"/><path d="M32 48h16" stroke="#e2752a" stroke-width="7" stroke-dasharray="4 2"/></svg></button>
  <div class="tray">
    <svg width="16" height="36" viewBox="0 0 16 36"><path d="M0 2q13 3 14 15Q12 29 0 31z" fill="#a6d4f2"/><path d="M0 4q7 5 6 12Q4 24 0 27z" fill="#eef8ff"/></svg>
    <span>16°C</span><span>Chuva fraca</span>
    <button aria-label="Ícones ocultos"><svg width="28" height="18" viewBox="0 0 28 18"><path d="M2 16L14 3l12 13" fill="none" stroke="#222" stroke-width="3"/></svg></button>
    <button aria-label="Rede"><svg width="38" height="32" viewBox="0 0 38 32"><path d="M11 2h25v21H7M1 2h10v11H1zM6 13v18M12 30h16M20 23v7M4 7h4" fill="none" stroke="#111" stroke-width="3"/></svg></button>
    <button aria-label="Volume"><svg width="38" height="32" viewBox="0 0 38 32"><path d="M2 11h6l7-8v26l-7-8H2z" fill="none" stroke="#111" stroke-width="3"/><path d="M20 11q4 5 0 10" fill="none" stroke="#333" stroke-width="3"/><path d="M25 6q8 10 0 20M31 3q9 13 0 26" fill="none" stroke="#888" stroke-width="2"/></svg></button>
    <time>17:25<br>27/08/2021</time>
    <button class="notes" aria-label="Notificações"><svg width="38" height="36" viewBox="0 0 38 36"><path d="M0 0h38v28H24l-6 8v-8H0z" fill="#000"/><path d="M7 8h24M7 14h24M7 20h18" stroke="#ddd" stroke-width="2"/></svg><b>1</b></button>
  </div>
</div>
</body>
</html>
```
FILE: styles.css
```css
* { box-sizing: border-box; }

body {
  margin: 0;
  min-height: 100vh;
  display: flex;
  flex-direction: column;
  padding-bottom: 12px;
  background: #fff;
  color: #444;
  font: 26px/34px "Open Sans", "Noto Sans", sans-serif;
}

button {
  border: 0;
  padding: 0;
  background: none;
  color: inherit;
  font: inherit;
  white-space: nowrap;
}

svg { flex: none; display: block; }
.defs { position: absolute; width: 0; height: 0; }

.app {
  flex: 1;
  display: flex;
  flex-direction: column;
  background: #505050;
  border: solid #505050;
  border-width: 0 9px 7px;
}

/* Title bar */
.titlebar {
  display: flex;
  height: 71px;
  margin: 0 -9px;
  padding: 0 9px;
  border-top: 3px solid #161616;
  color: #d6d6d6;
}

.quick, .title-right { display: grid; align-items: center; justify-items: center; }
.quick { grid-template-columns: 71px 46px 34px 52px 58px 52px 30px 54px 26px 20px 52px 56px 26px 58px 16px 68px 50px 230px 55px 230px 55px 56px 56px 52px 42px; }
.title-right {
  margin-left: auto;
  grid-template-columns: 466px 114px 95px 56px 186px 32px 68px 12px 68px 16px 102px 44px 63px;
}
.title-right > span, .login { justify-self: start; }
.quick button, .title-right button { display: flex; }

.logo {
  justify-self: start;
  padding-left: 13px;
  display: flex;
  flex-direction: column;
  align-items: center;
  color: #ef8a22;
  font-size: 15px;
  line-height: 16px;
}

.vsep { width: 2px; height: 48px; background: #8a8a8a; }

.combo {
  width: 230px;
  height: 50px;
  border: 0;
  color: #505050;
  font: inherit;
  background:
    linear-gradient(to bottom left, #4a4a4a 50%, transparent 50%) no-repeat right 14px center / 8px 10px,
    linear-gradient(to bottom right, #4a4a4a 50%, transparent 50%) no-repeat right 6px center / 8px 10px,
    #929292;
}
.combo-material, .combo-look select { appearance: none; }
.combo-material { padding: 0 10px; color: #757575; font-style: italic; }
.combo-look { display: flex; align-items: center; gap: 10px; padding-left: 10px; }
.combo-look select { flex: 1; min-width: 0; border: 0; padding: 0; background: none; color: inherit; font: inherit; }

.fx { color: #1c1c1c; font: 36px/40px "Liberation Serif", serif; align-items: baseline; }
.fx sub { font: italic bold 26px/26px "Liberation Serif", serif; }

.help-search { width: 95px; height: 44px; overflow: hidden; display: flex; justify-content: flex-end; background: #929292; }
.help-search input {
  flex: none;
  width: 124px;
  padding: 0 10px;
  border: 0;
  background: none;
  color: #dcdcdc;
  font: inherit;
  text-align: right;
}
.login { color: inherit; text-decoration: none; }
.help span {
  width: 36px;
  height: 36px;
  border-radius: 50%;
  background: #f4f5fa;
  color: #2447a8;
  font-weight: 700;
  line-height: 36px;
  text-align: center;
}
.title-right .min { padding-left: 32px; }

/* Ribbon tabs */
.tabs { display: flex; height: 46px; color: #cfcfcf; }
.tabs button { padding: 0 23px; }
.tabs .file { width: 136px; margin-right: 5px; padding: 0 6px 0 0; background: #ee8123; color: #fff; }
.tabs .active { background: #f5f5f5; color: #555; padding: 0 20px; }
.tabs .toggle { display: flex; align-items: center; gap: 13px; margin-left: 25px; color: #eee; }

/* Ribbon */
.ribbon { display: flex; height: 216px; background: #f5f5f5; color: #4a4a4e; }
.group { display: flex; flex-direction: column; border-right: 2px solid #dcdcdc; }
.g-measure { width: 129px; padding-right: 4px; }
.g-material { width: 441px; padding-right: 4px; }
.g-options { width: 1326px; padding-right: 4px; }
.g-clipboard { width: 393px; padding-left: 2px; }
.g-find { width: 182px; border: 0; }
.tools { display: flex; flex: 1; }
.caption { height: 40px; display: flex; justify-content: center; align-items: center; gap: 12px; padding-bottom: 1px; }

.big {
  position: relative;
  flex: 1 1 0;
  display: block;
  align-self: flex-start;
  padding-top: 12px;
  text-align: center;
}
.big > svg { margin: 0 auto 9px; }
.big > .drop { position: absolute; right: 12px; top: 128px; margin: 0; }
.rule { width: 2px; margin: 6px 0; background: #d6d6d6; }
button:disabled { color: #b9b9b9; }

.g-material .big { flex: 0 0 126px; }
.g-material .rule + .big { flex-basis: 160px; }
.g-options .big { flex: 0 0 180px; }
.g-options .big:nth-child(2), .g-options .big:nth-child(3) { flex-basis: 190px; }
.g-clipboard .big { flex: 0 0 104px; }
.g-clipboard .rule { margin-left: 16px; }
.g-clipboard .paste { flex: 0 0 168px; }

.small-col { display: flex; flex-direction: column; padding-top: 8px; }
.small-col button { display: flex; align-items: center; gap: 11px; height: 54px; }
.small-col svg { width: 36px; }
.mid-col { width: 266px; padding-left: 8px; }

/* Workspace */
.workspace { position: relative; flex: 1; display: flex; margin-right: -9px; padding-right: 9px; overflow: hidden; }

.browser { flex: none; width: 777px; background: #fff; color: #000; font: 25px/30px "DejaVu Sans Condensed", "Noto Sans", sans-serif; }
.browser-tabs { display: flex; align-items: center; height: 55px; background: #5f5f5f; color: #dedede; font-size: 24px; }
.browser-tabs button { padding-left: 8px; margin-right: 8px; }
.browser-tabs .active {
  display: flex;
  align-items: center;
  justify-content: space-between;
  width: 147px;
  height: 55px;
  margin: 0;
  padding: 0 18px 0 8px;
  background: #fff;
  color: #5b5b5b;
}
.browser-tabs .find { margin: 0 0 0 auto; }
.browser-tabs .menu { margin: 0 14px 0 12px; }

.root { display: flex; align-items: center; gap: 8px; height: 47px; margin-top: 16px; padding-left: 10px; font-size: 26px; font-weight: 700; }
.tree {
  list-style: none;
  display: grid;
  grid-auto-rows: 1fr;
  height: 750px;
  margin: 0;
  padding: 0;
  background: repeating-linear-gradient(#999 0 2px, #fff 2px 5px) no-repeat 20px 0 / 2px 730px;
}
.tree li { display: flex; align-items: center; padding-left: 13px; white-space: nowrap; }
.chev { width: 14px; height: 24px; padding: 2px 0; background: #fff; }
.ico { width: 37px; height: 38px; margin: 0 6px 0 16px; }

.stage { flex: 1; display: flex; flex-direction: column; min-width: 0; margin-left: 4px; }
.model { flex: 1; width: 100%; min-height: 0; background: linear-gradient(#5b6b80, #e5e5e5); }
.doc-tabs { flex: none; display: flex; height: 53px; padding-left: 3px; background: #5f5f5f; color: #d4d4d4; }
.doc-tabs button { display: flex; align-items: center; justify-content: center; width: 56px; }
.doc-tabs .home-tab { width: 170px; border-left: 2px solid #8c8c8c; }
.doc-tabs .doc-tab { width: 197px; gap: 14px; padding-right: 6px; background: #f5f5f5; color: #5c5c5c; }

.notice {
  position: absolute;
  left: 49%;
  top: 48.6%;
  margin: 0;
  transform: translate(-50%, -50%) rotate(-30deg);
  color: #fe0000;
  font: bold 58px/66px "Liberation Sans", sans-serif;
  text-align: center;
  white-space: nowrap;
}

/* Status bar */
.status { flex: none; display: flex; align-items: center; height: 55px; padding: 4px 0 0 3px; background: #f5f5f5; color: #111; }
.cell { width: 90px; height: 48px; border-left: 2px solid #d0d0d0; line-height: 46px; padding-left: 22px; }
.cell:nth-child(2) { margin-left: auto; }
.grip { width: 46px; height: 48px; border-left: 2px solid #d0d0d0; padding: 26px 0 0 22px; }

/* Taskbar */
.taskbar { flex: none; display: flex; height: 92px; background: #d8d8d9; color: #1a1a1a; }
.taskbar > button { display: flex; align-items: center; justify-content: center; width: 113px; }
.taskbar > .open { background: linear-gradient(#2a6ca9, #2a6ca9) no-repeat center bottom / 92px 5px; }
.taskbar > .current { background: linear-gradient(#2a6ca9, #2a6ca9) no-repeat center bottom / 100% 5px, #eeeeee; }
.word-w { fill: #fff; font: bold 24px "Open Sans", sans-serif; }
.search {
  display: flex;
  align-items: center;
  gap: 26px;
  width: 786px;
  margin: 3px 0 2px -1px;
  padding-left: 26px;
  background: #fff;
}
.search input { flex: 1; min-width: 0; padding: 6px 0 0; border: 0; background: none; font: 32px/44px "Open Sans", "Noto Sans", sans-serif; }
.search input::placeholder { color: #454545; opacity: 1; }

.tray {
  margin-left: auto;
  display: grid;
  grid-template-columns: 40px 85px 190px 56px 56px 52px 162px 110px;
  align-items: center;
  font-size: 30px;
}
.tray span { padding-top: 6px; }
.tray button { display: flex; justify-content: center; }
.tray time { font-size: 25px; line-height: 41px; text-align: center; }
.tray .notes { position: relative; justify-content: flex-start; padding-left: 28px; }
.notes b {
  position: absolute;
  left: 44px;
  top: 14px;
  width: 38px;
  height: 38px;
  border: 2px solid #777;
  border-radius: 50%;
  background: #d8d8d9;
  font-size: 24px;
  font-weight: 400;
  line-height: 34px;
}
```
